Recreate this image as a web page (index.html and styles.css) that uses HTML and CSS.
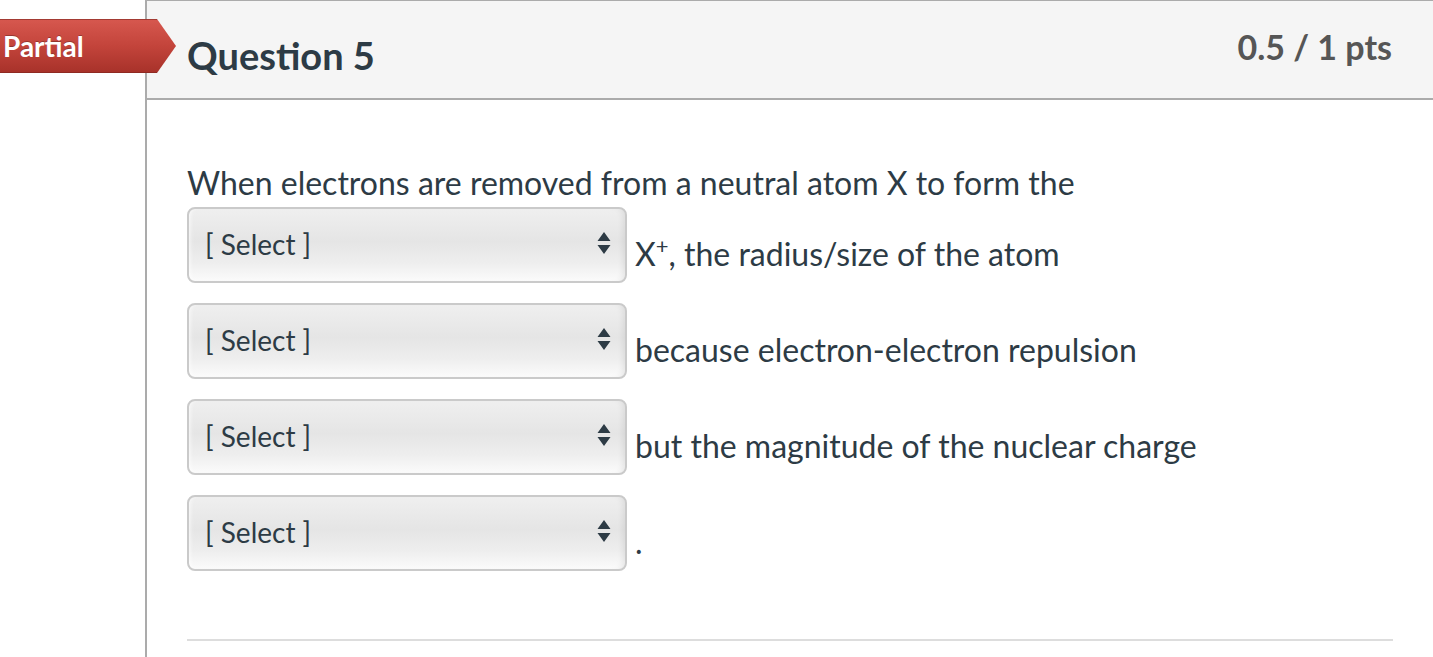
FILE: index.html
```html
<!DOCTYPE html>
<html>
<head>
<meta charset="utf-8">
<link rel="stylesheet" href="styles.css">
</head>
<body>
<div class="page">
  <div class="badge"><span class="badge-text">Partial</span></div>
  <div class="card">
    <div class="header">
      <h2 class="title">Question 5</h2>
      <div class="pts">0.5 / 1 pts</div>
    </div>
    <div class="body">
      <div class="question">
        <div class="line first">When electrons are removed from a neutral atom X to form the</div>
        <div class="row">
          <div class="select"><span>[ Select ]</span><svg class="arrows" width="14" height="24" viewBox="0 0 14 24"><path d="M7 1 L13.5 10 H0.5 Z M0.5 14 H13.5 L7 23 Z" fill="#2d3b45"/></svg></div>
          <span class="after">X<sup>+</sup>, the radius/size of the atom</span>
        </div>
        <div class="row">
          <div class="select"><span>[ Select ]</span><svg class="arrows" width="14" height="24" viewBox="0 0 14 24"><path d="M7 1 L13.5 10 H0.5 Z M0.5 14 H13.5 L7 23 Z" fill="#2d3b45"/></svg></div>
          <span class="after">because electron-electron repulsion</span>
        </div>
        <div class="row">
          <div class="select"><span>[ Select ]</span><svg class="arrows" width="14" height="24" viewBox="0 0 14 24"><path d="M7 1 L13.5 10 H0.5 Z M0.5 14 H13.5 L7 23 Z" fill="#2d3b45"/></svg></div>
          <span class="after">but the magnitude of the nuclear charge</span>
        </div>
        <div class="row">
          <div class="select"><span>[ Select ]</span><svg class="arrows" width="14" height="24" viewBox="0 0 14 24"><path d="M7 1 L13.5 10 H0.5 Z M0.5 14 H13.5 L7 23 Z" fill="#2d3b45"/></svg></div>
          <span class="after">.</span>
        </div>
      </div>
      <div class="divider"></div>
    </div>
  </div>
</div>
</body>
</html>
```

FILE: styles.css
```css
html, body {
  margin: 0;
  padding: 0;
  background: #fff;
  font-family: Lato, "Open Sans", sans-serif;
  color: #2d3b45;
  overflow: hidden;
}

.page {
  position: relative;
  height: 657px;
  overflow: hidden;
}

.badge {
  position: absolute;
  left: 0;
  top: 19px;
  width: 176px;
  height: 54px;
  background: linear-gradient(to bottom, #d6574e 0%, #c3443b 50%, #a8322a 100%);
  clip-path: polygon(0 0, 157px 0, 176px 27px, 157px 54px, 0 54px);
  z-index: 2;
  box-sizing: border-box;
  border-top: 1px solid #a33a33;
  border-bottom: 1px solid #8f2a23;
}

.badge-text {
  display: block;
  padding-left: 3px;
  font-size: 28px;
  font-weight: 700;
  color: #fff;
  line-height: 52px;
  text-shadow: 0 -1px 0 rgba(0,0,0,0.25);
}

.card {
  margin-left: 145px;
  border-left: 2px solid #ababab;
  border-top: 2px solid #ababab;
  margin-top: -1px;
  height: 658px;
}

.header {
  background: #f5f5f5;
  height: 97px;
  border-bottom: 2px solid #ababab;
  display: flex;
  justify-content: space-between;
  padding: 0 41px 0 40px;
}

.title {
  margin: 0;
  padding-top: 32px;
  font-size: 38px;
  font-weight: 700;
  color: #2d3b45;
  line-height: 44px;
}

.pts {
  padding-top: 26px;
  font-size: 34px;
  font-weight: 700;
  color: #565656;
  line-height: 40px;
}

.body {
  padding: 0 40px;
}

.question {
  padding-top: 63px;
}

.line {
  font-size: 32px;
  line-height: 40px;
}

.row {
  display: flex;
  align-items: flex-start;
  margin-top: 20px;
}

.line.first + .row {
  margin-top: 4px;
}

.select {
  width: 440px;
  height: 76px;
  box-sizing: border-box;
  border: 2px solid #cacaca;
  border-radius: 8px;
  background: linear-gradient(to bottom, #efefef 0%, #e5e5e5 45%, #eeeeee 75%, #fbfbfb 100%);
  box-shadow: inset -6px 0 6px -4px rgba(0,0,0,0.08), inset 4px 0 4px -3px rgba(255,255,255,0.8);
  display: flex;
  align-items: center;
  justify-content: space-between;
  padding: 0 14px 0 16px;
  font-size: 28px;
  color: #2d3b45;
  flex: none;
}

.select span {
  margin-top: -2px;
}

.arrows {
  display: block;
  margin-top: -4px;
}

.after {
  font-size: 32px;
  line-height: 40px;
  margin-left: 8px;
  padding-top: 27px;
}

.after sup {
  font-size: 22px;
  line-height: 0;
  vertical-align: 12px;
}

.divider {
  margin-top: 68px;
  height: 2px;
  background: #dddddd;
}
```
